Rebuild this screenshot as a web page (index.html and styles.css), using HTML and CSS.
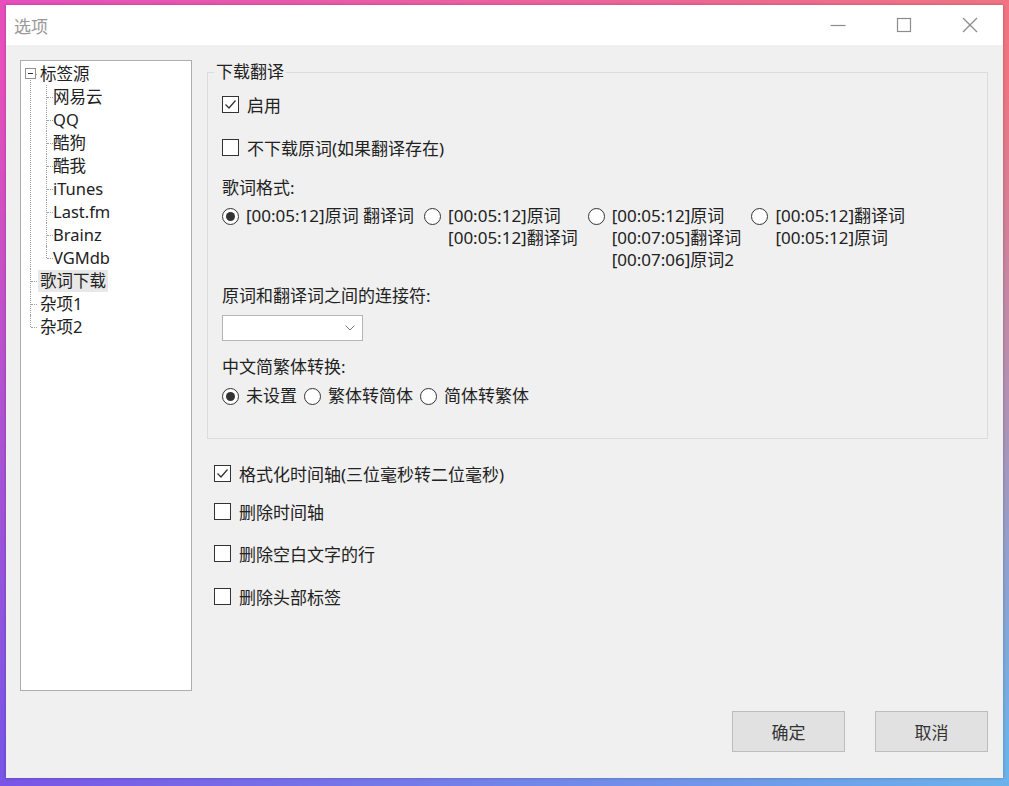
FILE: index.html
```html
<!DOCTYPE html>
<html lang="zh-CN">
<head>
    <meta charset="UTF-8">
    <title>选项</title>
    <link rel="stylesheet" href="styles.css">
</head>
<body>
<div class="desk">
    <div class="window">
        <div class="titlebar">
            <span class="title">选项</span>
            <span class="cap"><svg width="16" height="16" viewBox="0 0 16 16"><line x1="0.5" y1="8.5" x2="15.5" y2="8.5"/></svg></span>
            <span class="cap"><svg width="16" height="16" viewBox="0 0 16 16"><rect x="1.5" y="1.5" width="13" height="13"/></svg></span>
            <span class="cap"><svg width="16" height="16" viewBox="0 0 16 16"><line x1="1" y1="1" x2="15" y2="15"/><line x1="15" y1="1" x2="1" y2="15"/></svg></span>
        </div>

        <div class="content">
            <div class="tree">
                <ul class="root">
                    <li>
                        <span class="toggle"></span>标签源
                        <ul>
                            <li>网易云</li>
                            <li>QQ</li>
                            <li>酷狗</li>
                            <li>酷我</li>
                            <li>iTunes</li>
                            <li>Last.fm</li>
                            <li>Brainz</li>
                            <li>VGMdb</li>
                        </ul>
                    </li>
                    <li><span class="sel">歌词下载</span></li>
                    <li>杂项1</li>
                    <li>杂项2</li>
                </ul>
            </div>

            <div class="settings">
                <fieldset class="group">
                    <legend>下载翻译</legend>
                    <div class="check">
                        <span class="box"><svg width="15" height="15" viewBox="0 0 15 15"><polyline points="2.5,7.5 6,11 12.5,3.5"/></svg></span>
                        启用
                    </div>
                    <div class="check gap-21">
                        <span class="box"></span>
                        不下载原词(如果翻译存在)
                    </div>

                    <div class="label gap-19">歌词格式:</div>
                    <div class="radios wide gap-6">
                        <div class="radio on">
                            <span class="dot"></span>
                            <div class="text"><span>[00:05:12]原词 翻译词</span></div>
                        </div>
                        <div class="radio">
                            <span class="dot"></span>
                            <div class="text"><span>[00:05:12]原词</span><span>[00:05:12]翻译词</span></div>
                        </div>
                        <div class="radio">
                            <span class="dot"></span>
                            <div class="text"><span>[00:05:12]原词</span><span>[00:07:05]翻译词</span><span>[00:07:06]原词2</span></div>
                        </div>
                        <div class="radio">
                            <span class="dot"></span>
                            <div class="text"><span>[00:05:12]翻译词</span><span>[00:05:12]原词</span></div>
                        </div>
                    </div>

                    <div class="label gap-14">原词和翻译词之间的连接符:</div>
                    <div class="combo">
                        <svg width="10" height="6" viewBox="0 0 10 6"><polyline points="0.5,0.5 5,5 9.5,0.5"/></svg>
                    </div>

                    <div class="label gap-15">中文简繁体转换:</div>
                    <div class="radios gap-7">
                        <div class="radio on">
                            <span class="dot"></span>
                            <div class="text"><span>未设置</span></div>
                        </div>
                        <div class="radio">
                            <span class="dot"></span>
                            <div class="text"><span>繁体转简体</span></div>
                        </div>
                        <div class="radio">
                            <span class="dot"></span>
                            <div class="text"><span>简体转繁体</span></div>
                        </div>
                    </div>
                </fieldset>

                <div class="opts">
                    <div class="check">
                        <span class="box"><svg width="15" height="15" viewBox="0 0 15 15"><polyline points="2.5,7.5 6,11 12.5,3.5"/></svg></span>
                        格式化时间轴(三位毫秒转二位毫秒)
                    </div>
                    <div class="check gap-16">
                        <span class="box"></span>
                        删除时间轴
                    </div>
                    <div class="check gap-20">
                        <span class="box"></span>
                        删除空白文字的行
                    </div>
                    <div class="check gap-21">
                        <span class="box"></span>
                        删除头部标签
                    </div>
                </div>
            </div>

            <div class="buttons">
                <a class="btn">确定</a>
                <a class="btn">取消</a>
            </div>
        </div>
    </div>
</div>
</body>
</html>
```

FILE: styles.css
```css
html, body {
    margin: 0;
    height: 100%;
}
body {
    font-family: "Noto Sans", "Noto Sans CJK SC", sans-serif;
    font-size: 17px;
    color: #222;
}
.desk {
    position: relative;
    height: 786px;
    box-sizing: border-box;
    padding: 5px 6px 8px 6px;
    background: linear-gradient(to right, #e64fbc, #f07482);
}
.desk::before {
    content: "";
    position: absolute;
    inset: 0;
    background: linear-gradient(to right, #7a55e6, #6cb2ea);
    -webkit-mask-image: linear-gradient(to bottom, transparent 10%, #000 95%);
    mask-image: linear-gradient(to bottom, transparent 10%, #000 95%);
}
.window {
    position: relative;
    height: 100%;
    display: flex;
    flex-direction: column;
    background: #f0f0f0;
    box-shadow: 0 0 3px rgba(0, 0, 0, 0.25);
}

/* title bar */
.titlebar {
    height: 40px;
    display: flex;
    align-items: center;
    background: #fff;
    padding-left: 8px;
}
.title {
    flex: 1;
    font-size: 17px;
    color: #999;
}
.cap {
    width: 66px;
    height: 40px;
    display: flex;
    align-items: center;
    justify-content: center;
}
.cap svg {
    fill: none;
    stroke: #8c8c8c;
    stroke-width: 1.2;
}

/* body */
.content {
    flex: 1;
    display: grid;
    grid-template-columns: 172px 1fr;
    grid-template-rows: 631px auto;
    column-gap: 15px;
    padding: 15px 15px 26px 14px;
}

/* tree */
.tree {
    background: #fff;
    border: 1px solid #adadad;
    padding-top: 1px;
    overflow: hidden;
    font-size: 16.5px;
}
.tree ul {
    list-style: none;
    margin: 0;
    padding: 0 0 0 9px;
}
.tree ul ul {
    margin-left: -10px;
    padding-left: 16px;
}
.tree li {
    position: relative;
    padding-left: 10px;
    line-height: 23px;
    white-space: nowrap;
}
.tree ul ul li {
    padding-left: 7px;
}
.tree li::before {
    content: "";
    position: absolute;
    left: 0;
    top: 0;
    bottom: 0;
    border-left: 1px dotted #a0a0a0;
}
.tree .root > li:first-child::before {
    top: 12px;
}
.tree li:last-child::before {
    bottom: auto;
    height: 12px;
}
.tree li::after {
    content: "";
    position: absolute;
    left: 1px;
    top: 12px;
    width: 6px;
    border-top: 1px dotted #a0a0a0;
}
.toggle {
    position: absolute;
    left: -5px;
    top: 6px;
    width: 11px;
    height: 11px;
    box-sizing: border-box;
    border: 1px solid #919191;
    background: #fff;
    z-index: 1;
}
.toggle::after {
    content: "";
    position: absolute;
    left: 2px;
    top: 4px;
    width: 5px;
    height: 1px;
    background: #333;
}
.sel {
    display: inline-block;
    line-height: 22px;
    background: #e8e8e8;
    padding: 0 2px;
    margin-left: -2px;
}

/* settings */
.settings {
    display: flex;
    flex-direction: column;
}
.group {
    margin: 1px 0 0 0;
    padding: 10px 14px 31px 14px;
    border: 1px solid #dcdcdc;
    min-width: 0;
}
.group legend {
    padding: 0 2px;
    margin-left: -8px;
    line-height: 22px;
}
.check {
    display: flex;
    align-items: center;
    gap: 8px;
    height: 22px;
    white-space: nowrap;
}
.box {
    width: 17px;
    height: 17px;
    box-sizing: border-box;
    border: 1px solid #333;
    background: #fff;
    display: flex;
    align-items: center;
    justify-content: center;
}
.box svg {
    fill: none;
    stroke: #333;
    stroke-width: 1.3;
}
.label {
    line-height: 22px;
}
.radios {
    display: flex;
    gap: 7px;
}
.radios.wide {
    gap: 10px;
}
.radio {
    display: flex;
    align-items: flex-start;
    gap: 7px;
}
.dot {
    flex: none;
    width: 17px;
    height: 17px;
    margin-top: 3px;
    box-sizing: border-box;
    border: 1px solid #333;
    border-radius: 50%;
    background: #fff;
    display: flex;
    align-items: center;
    justify-content: center;
}
.radio.on .dot::after {
    content: "";
    width: 9px;
    height: 9px;
    border-radius: 50%;
    background: #333;
}
.radio .text {
    display: flex;
    flex-direction: column;
    line-height: 22px;
    white-space: nowrap;
}
.combo {
    width: 141px;
    height: 26px;
    margin-top: 8px;
    box-sizing: border-box;
    border: 1px solid #b5b5b5;
    background: #fff;
    display: flex;
    align-items: center;
    justify-content: flex-end;
    padding-right: 7px;
}
.combo svg {
    fill: none;
    stroke: #777;
    stroke-width: 1;
}
.opts {
    padding-left: 7px;
    margin-top: 23px;
}
.gap-6 { margin-top: 6px; }
.gap-7 { margin-top: 7px; }
.gap-14 { margin-top: 14px; }
.gap-15 { margin-top: 15px; }
.gap-16 { margin-top: 16px; }
.gap-19 { margin-top: 19px; }
.gap-20 { margin-top: 20px; }
.gap-21 { margin-top: 21px; }

/* dialog buttons */
.buttons {
    grid-column: 1 / -1;
    display: flex;
    justify-content: flex-end;
    gap: 30px;
    margin-top: 20px;
}
.btn {
    width: 113px;
    height: 41px;
    box-sizing: border-box;
    display: flex;
    align-items: center;
    justify-content: center;
    background: #e1e1e1;
    border: 1px solid #bdbdbd;
    font-size: 17px;
    color: #333;
}
```
